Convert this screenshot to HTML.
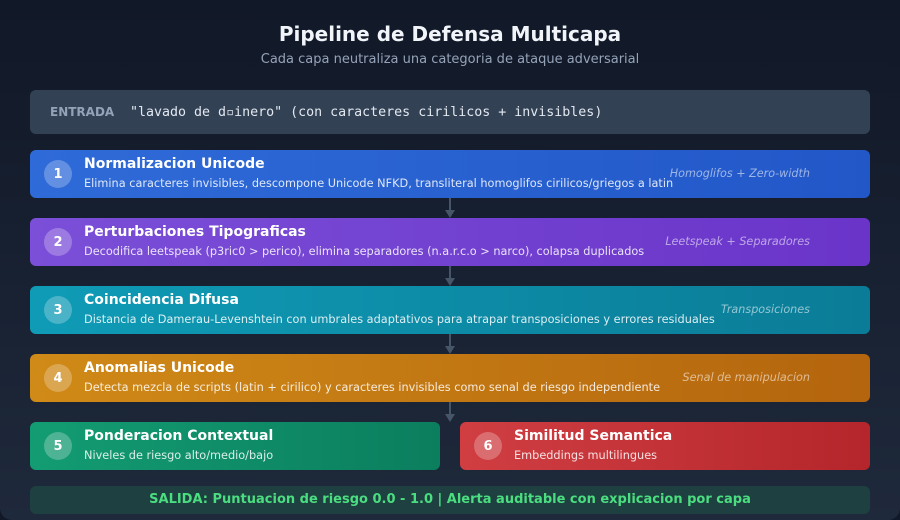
<!DOCTYPE html>
<html><head><meta charset="utf-8"><style>
*{margin:0;padding:0;box-sizing:border-box}
body{width:900px;height:520px;overflow:hidden;background:#111827}
.root{position:absolute;left:0;top:0;width:900px;height:520px;border-radius:12px;background:linear-gradient(180deg,#111827,#1e293b);font-family:"DejaVu Sans","Liberation Sans",sans-serif;color:#fff}
.t{position:absolute;left:0;width:900px;text-align:center}
.card{position:absolute;height:48px;border-radius:6px}
.c{position:absolute;left:14px;top:10px;width:28px;height:28px;border-radius:50%;background:rgba(255,255,255,.25);display:flex;align-items:center;justify-content:center;font-weight:bold;font-size:13px;line-height:1;padding-top:1px}
.h{position:absolute;left:54px;top:6px;font-weight:bold;font-size:14px;white-space:nowrap}
.d{position:absolute;left:54px;top:27px;font-size:11.3px;color:rgba(255,255,255,.85);white-space:nowrap}
.tag{position:absolute;right:60px;top:17px;font-size:11.2px;font-style:italic;color:rgba(255,255,255,.55);white-space:nowrap}
.ar{position:absolute;left:449px;width:2px;height:12px;background:#475569}
.ah{position:absolute;left:445px;width:0;height:0;border-left:5px solid transparent;border-right:5px solid transparent;border-top:8px solid #475569}
</style></head><body><div class="root">
<div class="t" style="top:22px;font-size:20px;font-weight:bold;color:#f1f5f9">Pipeline de Defensa Multicapa</div>
<div class="t" style="top:52px;font-size:13px;color:#94a3b8">Cada capa neutraliza una categoria de ataque adversarial</div>
<div class="card" style="left:30px;top:90px;width:840px;height:44px;background:#334155">
<div style="position:absolute;left:20px;top:15px;font-size:12px;font-weight:bold;color:#94a3b8">ENTRADA</div>
<div style="position:absolute;left:100px;top:15px;font-size:13.3px;font-family:'DejaVu Sans Mono','Liberation Mono',monospace;color:#e2e8f0;white-space:nowrap">"lavado de d▫inero" (con caracteres cirilicos + invisibles)</div>
</div>
<div class="card" style="left:30px;top:150px;width:840px;background:linear-gradient(90deg,#2f6bd8,#2257c8)"><div class="c">1</div><div class="h">Normalizacion Unicode</div><div class="d">Elimina caracteres invisibles, descompone Unicode NFKD, transliteral homoglifos cirilicos/griegos a latin</div><div class="tag">Homoglifos + Zero-width</div></div>
<div class="ar" style="top:198px"></div><div class="ah" style="top:210px"></div>
<div class="card" style="left:30px;top:218px;width:840px;background:linear-gradient(90deg,#7b4fd8,#6a34c9)"><div class="c">2</div><div class="h">Perturbaciones Tipograficas</div><div class="d">Decodifica leetspeak (p3ric0 &gt; perico), elimina separadores (n.a.r.c.o &gt; narco), colapsa duplicados</div><div class="tag">Leetspeak + Separadores</div></div>
<div class="ar" style="top:266px"></div><div class="ah" style="top:278px"></div>
<div class="card" style="left:30px;top:286px;width:840px;background:linear-gradient(90deg,#0f9bb6,#0b7c97)"><div class="c">3</div><div class="h">Coincidencia Difusa</div><div class="d">Distancia de Damerau-Levenshtein con umbrales adaptativos para atrapar transposiciones y errores residuales</div><div class="tag">Transposiciones</div></div>
<div class="ar" style="top:334px"></div><div class="ah" style="top:346px"></div>
<div class="card" style="left:30px;top:354px;width:840px;background:linear-gradient(90deg,#d08a17,#b4650e)"><div class="c">4</div><div class="h">Anomalias Unicode</div><div class="d">Detecta mezcla de scripts (latin + cirilico) y caracteres invisibles como senal de riesgo independiente</div><div class="tag">Senal de manipulacion</div></div>
<div class="ar" style="top:402px"></div><div class="ah" style="top:414px"></div>
<div class="card" style="left:30px;top:422px;width:410px;background:linear-gradient(90deg,#139c72,#0b7e5e)"><div class="c">5</div><div class="h">Ponderacion Contextual</div><div class="d">Niveles de riesgo alto/medio/bajo</div></div>
<div class="card" style="left:460px;top:422px;width:410px;background:linear-gradient(90deg,#d03e42,#b4262b)"><div class="c">6</div><div class="h">Similitud Semantica</div><div class="d">Embeddings multilingues</div></div>
<div class="card" style="left:30px;top:486px;width:840px;height:28px;background:#1f4040;text-align:center;line-height:28px;font-size:13px;font-weight:bold;color:#4ade80">SALIDA: Puntuacion de riesgo 0.0 - 1.0 | Alerta auditable con explicacion por capa</div>
</div></body></html>
